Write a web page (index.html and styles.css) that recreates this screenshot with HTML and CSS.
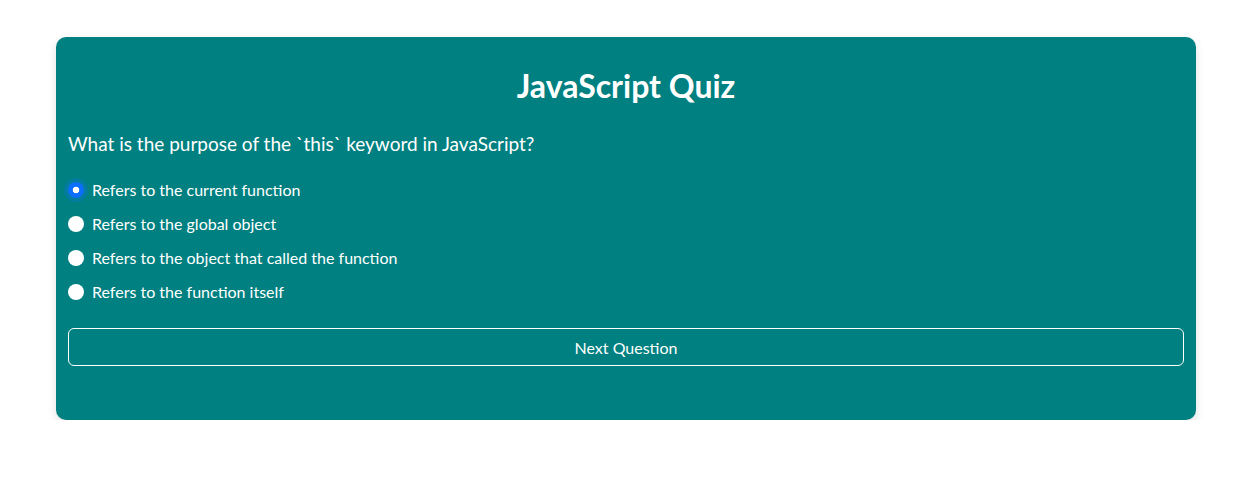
FILE: index.html
```html
<!DOCTYPE html>
<html lang="en">
<head>
<meta charset="utf-8">
<title>JavaScript Quiz</title>
<link rel="stylesheet" href="styles.css">
</head>
<body>
<main class="quiz">
  <h2 class="quiz-title">JavaScript Quiz</h2>
  <p class="quiz-question">What is the purpose of the `this` keyword in JavaScript?</p>
  <div class="quiz-options">
    <label class="option"><input type="radio" name="answer" class="option-input" checked><span>Refers to the current function</span></label>
    <label class="option"><input type="radio" name="answer" class="option-input"><span>Refers to the global object</span></label>
    <label class="option"><input type="radio" name="answer" class="option-input"><span>Refers to the object that called the function</span></label>
    <label class="option"><input type="radio" name="answer" class="option-input"><span>Refers to the function itself</span></label>
  </div>
  <button class="next-btn" type="button">Next Question</button>
</main>
</body>
</html>
```

FILE: styles.css
```css
* { box-sizing: border-box; }

body {
  margin: 0;
  padding-left: 4px;
  background: #ffffff;
  font-family: "Lato", "Noto Sans", sans-serif;
}

.quiz {
  width: 1140px;
  margin: 37px auto 0;
  padding: 30px 12px 54px;
  background: #008080;
  color: #ffffff;
  border-radius: 10px;
  box-shadow: 0 4px 10px rgba(0, 0, 0, 0.12);
  display: flex;
  flex-direction: column;
}

.quiz-title {
  margin: 0;
  font-size: 32px;
  line-height: 38px;
  font-weight: 700;
  text-align: center;
}

.quiz-question {
  margin: 27px 0 0;
  font-size: 19px;
  line-height: 24px;
}

.quiz-options {
  margin-top: 22px;
  display: flex;
  flex-direction: column;
  gap: 10px;
}

.option {
  display: flex;
  align-items: center;
  gap: 8px;
  font-size: 16px;
  line-height: 24px;
  cursor: pointer;
}

.option-input {
  appearance: none;
  -webkit-appearance: none;
  margin: 0;
  width: 16px;
  height: 16px;
  border-radius: 50%;
  background: #ffffff;
  flex: none;
}

.option-input:checked {
  background: radial-gradient(circle, #ffffff 0 3px, #0d6efd 3.6px);
  box-shadow: 0 0 0 4px rgba(13, 110, 253, 0.25);
}

.next-btn {
  margin-top: 24px;
  height: 38px;
  width: 100%;
  background: transparent;
  color: #ffffff;
  border: 1px solid #ffffff;
  border-radius: 6px;
  font-family: inherit;
  font-size: 16px;
}
```
